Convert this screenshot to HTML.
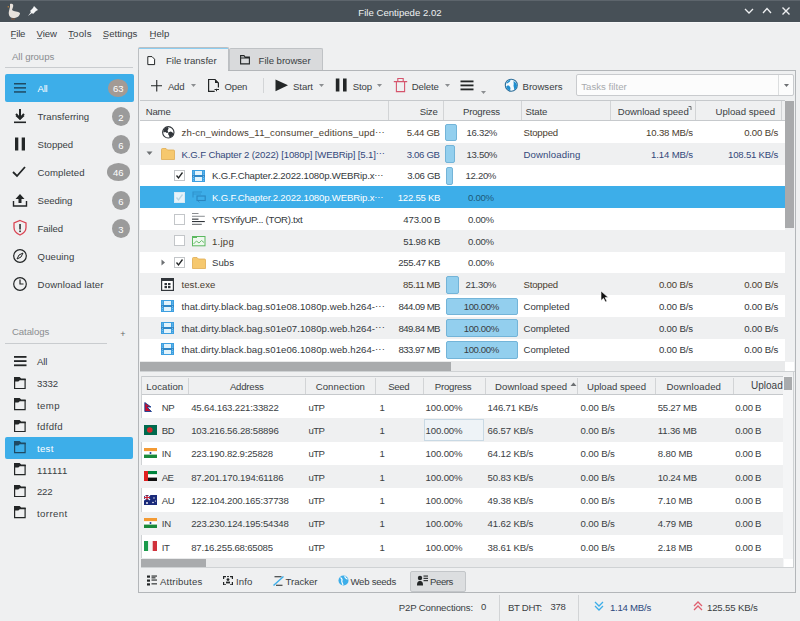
<!DOCTYPE html><html><head><meta charset="utf-8"><style>
html,body{margin:0;padding:0;}
body{width:800px;height:621px;overflow:hidden;background:#eff0f1;font-family:"Liberation Sans", sans-serif;position:relative;}
</style></head><body><div style="position:absolute;left:0px;top:0px;width:800px;height:22px;background:#475057;"></div><div style="position:absolute;left:0px;top:0px;width:800px;height:1px;background:#5d656c;"></div><div style="position:absolute;left:0px;top:22px;width:800px;height:1px;background:#f6f7f8;"></div><div style="position:absolute;left:250.01px;width:300px;top:6.91px;font-size:9.6px;line-height:11.04px;color:#eef0f2;white-space:nowrap;text-align:center;letter-spacing:0.013px;">File Centipede 2.02</div><svg style="position:absolute;left:6px;top:2px;" width="16" height="18" viewBox="0 0 16 18"><path d="M4 2 C6 1 8 2 7 5 L6 8 C8 10 12 9 14 11 C14 14 11 16 7 16 C4 16 2 13 3 9 L4 5 Z" fill="#e8e2dc"/><path d="M3 4 L1 5 L3 5.5Z" fill="#d08a3a"/><path d="M6 16 L6 18 M8 16 L8 18" stroke="#8a5a40" stroke-width="1"/></svg><svg style="position:absolute;left:27px;top:5px;" width="12" height="12" viewBox="0 0 12 12"><path d="M7 1 L11 5 L9 6 L6 9 L5 8 L1 11 L4 7 L3 6 L6 3 Z" fill="#f4f5f6"/></svg><svg style="position:absolute;left:743px;top:6px;" width="12" height="9" viewBox="0 0 12 9"><path d="M2 3 L6 7 L10 3" stroke="#eef0f2" stroke-width="1.3" fill="none"/></svg><svg style="position:absolute;left:761px;top:6px;" width="12" height="9" viewBox="0 0 12 9"><path d="M2 7 L6 2.5 L10 7" stroke="#eef0f2" stroke-width="1.3" fill="none"/></svg><svg style="position:absolute;left:780px;top:5px;" width="12" height="12" viewBox="0 0 12 12"><path d="M2.5 2.5 L9.5 9.5 M9.5 2.5 L2.5 9.5" stroke="#eef0f2" stroke-width="1.4" fill="none"/></svg><div style="position:absolute;left:10.6px;top:28.21px;font-size:9.6px;line-height:11.04px;color:#3a3e43;white-space:nowrap;letter-spacing:-0.217px;">File</div><div style="position:absolute;left:11.1px;top:38.3px;width:5px;height:1px;background:#7a7e82;"></div><div style="position:absolute;left:36.5px;top:28.21px;font-size:9.6px;line-height:11.04px;color:#3a3e43;white-space:nowrap;letter-spacing:-0.034px;">View</div><div style="position:absolute;left:37.0px;top:38.3px;width:5px;height:1px;background:#7a7e82;"></div><div style="position:absolute;left:68px;top:28.21px;font-size:9.6px;line-height:11.04px;color:#3a3e43;white-space:nowrap;letter-spacing:0.278px;">Tools</div><div style="position:absolute;left:68.5px;top:38.3px;width:5px;height:1px;background:#7a7e82;"></div><div style="position:absolute;left:102.8px;top:28.21px;font-size:9.6px;line-height:11.04px;color:#3a3e43;white-space:nowrap;letter-spacing:-0.023px;">Settings</div><div style="position:absolute;left:103.3px;top:38.3px;width:5px;height:1px;background:#7a7e82;"></div><div style="position:absolute;left:149.6px;top:28.21px;font-size:9.6px;line-height:11.04px;color:#3a3e43;white-space:nowrap;letter-spacing:-0.036px;">Help</div><div style="position:absolute;left:150.1px;top:38.3px;width:5px;height:1px;background:#7a7e82;"></div><div style="position:absolute;left:12px;top:51.21px;font-size:9.6px;line-height:11.04px;color:#8a8d90;white-space:nowrap;letter-spacing:-0.049px;">All groups</div><div style="position:absolute;left:5px;top:67px;width:128px;height:1px;background:#c9cccf;"></div><div style="position:absolute;left:5px;top:74px;width:129px;height:28px;background:#3daee9;border-radius:2px;"></div><svg style="position:absolute;left:14px;top:82.2px;" width="12" height="12" viewBox="0 0 12 12"><rect x="0" y="1.0" width="12" height="1.5" fill="#1f4a63"/><rect x="0" y="5.1" width="12" height="1.5" fill="#1f4a63"/><rect x="0" y="9.2" width="12" height="1.5" fill="#1f4a63"/></svg><div style="position:absolute;left:37.5px;top:83.11px;font-size:9.6px;line-height:11.04px;color:#ffffff;white-space:nowrap;letter-spacing:-0.223px;">All</div><div style="position:absolute;left:108.3px;top:79.4px;width:20px;height:17.2px;border-radius:50%;background:#a39a94;color:#ffffff;font-size:9.5px;line-height:17.2px;text-align:center;box-sizing:border-box;padding-top:1px;">63</div><div style="position:absolute;left:37.6px;top:111.11px;font-size:9.6px;line-height:11.04px;color:#3a3e43;white-space:nowrap;letter-spacing:0.018px;">Transferring</div><div style="position:absolute;left:112px;top:106.5px;width:18px;height:19.0px;border-radius:50%;background:#9b9b9b;color:#ffffff;font-size:9.5px;line-height:19.0px;text-align:center;box-sizing:border-box;padding-top:1px;">2</div><div style="position:absolute;left:37.6px;top:139.11px;font-size:9.6px;line-height:11.04px;color:#3a3e43;white-space:nowrap;letter-spacing:-0.023px;">Stopped</div><div style="position:absolute;left:112px;top:134.5px;width:18px;height:19.0px;border-radius:50%;background:#9b9b9b;color:#ffffff;font-size:9.5px;line-height:19.0px;text-align:center;box-sizing:border-box;padding-top:1px;">6</div><div style="position:absolute;left:37.6px;top:167.11px;font-size:9.6px;line-height:11.04px;color:#3a3e43;white-space:nowrap;letter-spacing:0.075px;">Completed</div><div style="position:absolute;left:106.5px;top:163px;width:23.6px;height:18px;border-radius:50%;background:#9b9b9b;color:#ffffff;font-size:9.5px;line-height:18px;text-align:center;box-sizing:border-box;padding-top:1px;">46</div><div style="position:absolute;left:37.6px;top:195.11px;font-size:9.6px;line-height:11.04px;color:#3a3e43;white-space:nowrap;letter-spacing:-0.090px;">Seeding</div><div style="position:absolute;left:112px;top:190.5px;width:18px;height:19.0px;border-radius:50%;background:#9b9b9b;color:#ffffff;font-size:9.5px;line-height:19.0px;text-align:center;box-sizing:border-box;padding-top:1px;">6</div><div style="position:absolute;left:37.6px;top:223.11px;font-size:9.6px;line-height:11.04px;color:#3a3e43;white-space:nowrap;letter-spacing:-0.124px;">Failed</div><div style="position:absolute;left:112px;top:218.5px;width:18px;height:19.0px;border-radius:50%;background:#9b9b9b;color:#ffffff;font-size:9.5px;line-height:19.0px;text-align:center;box-sizing:border-box;padding-top:1px;">3</div><div style="position:absolute;left:37.6px;top:251.11px;font-size:9.6px;line-height:11.04px;color:#3a3e43;white-space:nowrap;letter-spacing:0.073px;">Queuing</div><div style="position:absolute;left:37.6px;top:279.11px;font-size:9.6px;line-height:11.04px;color:#3a3e43;white-space:nowrap;letter-spacing:0.141px;">Download later</div><svg style="position:absolute;left:13px;top:108px;" width="14" height="16" viewBox="0 0 14 16"><path d="M7 1 V10 M3 6 L7 10.5 L11 6" stroke="#232627" stroke-width="2" fill="none"/><path d="M2.5 8 L7 12 L11.5 8Z" fill="#232627"/><rect x="1" y="13.5" width="12" height="1.6" fill="#232627"/></svg><svg style="position:absolute;left:14px;top:137px;" width="14" height="14" viewBox="0 0 14 14"><rect x="1" y="0.5" width="3.3" height="13" fill="#232627"/><rect x="7.7" y="0.5" width="3.3" height="13" fill="#232627"/></svg><svg style="position:absolute;left:11px;top:165px;" width="16" height="14" viewBox="0 0 16 14"><path d="M2 7 L6 11 L14 2" stroke="#232627" stroke-width="1.8" fill="none"/></svg><svg style="position:absolute;left:12px;top:192px;" width="16" height="16" viewBox="0 0 16 16"><path d="M8 2 L3.5 7 H6.5 V11 H9.5 V7 H12.5Z" fill="#232627"/><path d="M1.5 9 V14 H14.5 V9" stroke="#232627" stroke-width="1.4" fill="none"/></svg><svg style="position:absolute;left:12px;top:219px;" width="16" height="17" viewBox="0 0 16 17"><path d="M8 1.5 L14 4 V8.5 C14 12 11.5 14.5 8 16 C4.5 14.5 2 12 2 8.5 V4Z" stroke="#da4453" stroke-width="1.3" fill="none"/><rect x="7.3" y="5" width="1.5" height="5.5" fill="#232627"/><rect x="7.3" y="11.5" width="1.5" height="1.6" fill="#232627"/></svg><svg style="position:absolute;left:12px;top:248px;" width="16" height="16" viewBox="0 0 16 16"><circle cx="8" cy="8" r="6.3" stroke="#232627" stroke-width="1.2" fill="none"/><path d="M11 5 L9 9 L5 11 L7 7Z" stroke="#232627" stroke-width="1" fill="none"/></svg><svg style="position:absolute;left:12px;top:276px;" width="16" height="16" viewBox="0 0 16 16"><circle cx="8" cy="8" r="6.3" stroke="#232627" stroke-width="1.2" fill="none"/><path d="M8 3.5 V8 H11.5" stroke="#232627" stroke-width="1.2" fill="none"/></svg><div style="position:absolute;left:12px;top:325.91px;font-size:9.6px;line-height:11.04px;color:#8a8d90;white-space:nowrap;letter-spacing:-0.098px;">Catalogs</div><div style="position:absolute;left:120.2px;top:328.75px;font-size:9px;line-height:10.35px;color:#666;white-space:nowrap;">+</div><div style="position:absolute;left:5px;top:343px;width:102px;height:1px;background:#c9cccf;"></div><svg style="position:absolute;left:14px;top:355px;" width="12.5" height="12" viewBox="0 0 12.5 12"><rect x="0" y="1.0" width="12.5" height="1.8" fill="#232627"/><rect x="0" y="5.2" width="12.5" height="1.8" fill="#232627"/><rect x="0" y="9.4" width="12.5" height="1.8" fill="#232627"/></svg><div style="position:absolute;left:37px;top:356.21px;font-size:9.6px;line-height:11.04px;color:#3a3e43;white-space:nowrap;letter-spacing:-0.090px;">All</div><svg style="position:absolute;left:14px;top:376.6px;" width="12" height="12.5" viewBox="0 0 12 12.5"><path d="M0.6 0.5 V11.6 H11.1 V2" stroke="#232627" stroke-width="1.2" fill="none"/><path d="M0 0 H5.6 L7.2 1.5 H11.7 V3.2 H5.8 L4.3 4.6 H0Z" fill="#232627"/></svg><div style="position:absolute;left:37px;top:378.11px;font-size:9.6px;line-height:11.04px;color:#3a3e43;white-space:nowrap;letter-spacing:-0.063px;">3332</div><svg style="position:absolute;left:14px;top:398.20000000000005px;" width="12" height="12.5" viewBox="0 0 12 12.5"><path d="M0.6 0.5 V11.6 H11.1 V2" stroke="#232627" stroke-width="1.2" fill="none"/><path d="M0 0 H5.6 L7.2 1.5 H11.7 V3.2 H5.8 L4.3 4.6 H0Z" fill="#232627"/></svg><div style="position:absolute;left:37px;top:399.71px;font-size:9.6px;line-height:11.04px;color:#3a3e43;white-space:nowrap;letter-spacing:0.415px;">temp</div><svg style="position:absolute;left:14px;top:419.8px;" width="12" height="12.5" viewBox="0 0 12 12.5"><path d="M0.6 0.5 V11.6 H11.1 V2" stroke="#232627" stroke-width="1.2" fill="none"/><path d="M0 0 H5.6 L7.2 1.5 H11.7 V3.2 H5.8 L4.3 4.6 H0Z" fill="#232627"/></svg><div style="position:absolute;left:37px;top:421.31px;font-size:9.6px;line-height:11.04px;color:#3a3e43;white-space:nowrap;letter-spacing:0.331px;">fdfdfd</div><div style="position:absolute;left:5px;top:436.8px;width:128px;height:22px;background:#3daee9;border-radius:2px;"></div><svg style="position:absolute;left:14px;top:441.40000000000003px;" width="12" height="12.5" viewBox="0 0 12 12.5"><path d="M0.6 0.5 V11.6 H11.1 V2" stroke="#1f4a63" stroke-width="1.2" fill="none"/><path d="M0 0 H5.6 L7.2 1.5 H11.7 V3.2 H5.8 L4.3 4.6 H0Z" fill="#1f4a63"/></svg><div style="position:absolute;left:37px;top:442.91px;font-size:9.6px;line-height:11.04px;color:#ffffff;white-space:nowrap;letter-spacing:0.307px;">test</div><svg style="position:absolute;left:14px;top:463.0px;" width="12" height="12.5" viewBox="0 0 12 12.5"><path d="M0.6 0.5 V11.6 H11.1 V2" stroke="#232627" stroke-width="1.2" fill="none"/><path d="M0 0 H5.6 L7.2 1.5 H11.7 V3.2 H5.8 L4.3 4.6 H0Z" fill="#232627"/></svg><div style="position:absolute;left:37px;top:464.51px;font-size:9.6px;line-height:11.04px;color:#3a3e43;white-space:nowrap;letter-spacing:0.372px;">111111</div><svg style="position:absolute;left:14px;top:484.6px;" width="12" height="12.5" viewBox="0 0 12 12.5"><path d="M0.6 0.5 V11.6 H11.1 V2" stroke="#232627" stroke-width="1.2" fill="none"/><path d="M0 0 H5.6 L7.2 1.5 H11.7 V3.2 H5.8 L4.3 4.6 H0Z" fill="#232627"/></svg><div style="position:absolute;left:37px;top:486.11px;font-size:9.6px;line-height:11.04px;color:#3a3e43;white-space:nowrap;letter-spacing:-0.272px;">222</div><svg style="position:absolute;left:14px;top:506.20000000000005px;" width="12" height="12.5" viewBox="0 0 12 12.5"><path d="M0.6 0.5 V11.6 H11.1 V2" stroke="#232627" stroke-width="1.2" fill="none"/><path d="M0 0 H5.6 L7.2 1.5 H11.7 V3.2 H5.8 L4.3 4.6 H0Z" fill="#232627"/></svg><div style="position:absolute;left:37px;top:507.71px;font-size:9.6px;line-height:11.04px;color:#3a3e43;white-space:nowrap;letter-spacing:0.422px;">torrent</div><div style="position:absolute;left:229px;top:47.5px;width:94px;height:23px;background:#d9dadc;border:1px solid #bfc2c5;border-bottom:none;box-sizing:border-box;border-radius:2px 2px 0 0;"></div><div style="position:absolute;left:138px;top:47px;width:91px;height:24px;background:#eff0f1;border:1px solid #bcbfc2;border-bottom:none;box-sizing:border-box;border-radius:2px 2px 0 0;"></div><div style="position:absolute;left:139px;top:47.5px;width:89px;height:1.5px;background:#8ccdf0;"></div><svg style="position:absolute;left:147px;top:55.5px;" width="9" height="10" viewBox="0 0 9 10"><path d="M0.8 0.6 H5 L7.6 3.2 V8.6 H0.8Z" stroke="#232627" stroke-width="1" fill="#fcfcfc"/></svg><div style="position:absolute;left:166px;top:55.01px;font-size:9.6px;line-height:11.04px;color:#3a3e43;white-space:nowrap;letter-spacing:-0.006px;">File transfer</div><svg style="position:absolute;left:239.5px;top:55px;" width="10" height="9.5" viewBox="0 0 10 9.5"><path d="M0.6 0.6 H4 L5 2 H9.4 V8.9 H0.6Z M0.6 3 H9.4" stroke="#232627" stroke-width="1.1" fill="none"/></svg><div style="position:absolute;left:258.6px;top:55.01px;font-size:9.6px;line-height:11.04px;color:#3a3e43;white-space:nowrap;letter-spacing:-0.023px;">File browser</div><div style="position:absolute;left:138px;top:70px;width:658px;height:523px;border:1px solid #b3b6b9;box-sizing:border-box;background:#eff0f1;"></div><div style="position:absolute;left:139px;top:70px;width:89px;height:1px;background:#eff0f1;"></div><svg style="position:absolute;left:150.5px;top:80px;" width="11.5" height="11.5" viewBox="0 0 11.5 11.5"><path d="M5.75 0 V11.5 M0 5.75 H11.5" stroke="#232627" stroke-width="1.1"/></svg><div style="position:absolute;left:168px;top:81.31px;font-size:9.6px;line-height:11.04px;color:#3a3e43;white-space:nowrap;letter-spacing:-0.294px;">Add</div><svg style="position:absolute;left:190.5px;top:84px;" width="6" height="4" viewBox="0 0 6 4"><path d="M0 0 H5 L2.5 3Z" fill="#8b8e91"/></svg><svg style="position:absolute;left:207px;top:78px;" width="14" height="15" viewBox="0 0 14 15"><path d="M7.7 13.3 H1.6 V1.5 H8 L11.4 5 V9.5" stroke="#232627" stroke-width="1.2" fill="none"/><path d="M8 1.5 L11.4 5 H8Z" fill="#232627"/><path d="M7.5 11.5 H12 M9.5 10.8 V13.2" stroke="#232627" stroke-width="1"/></svg><div style="position:absolute;left:224.5px;top:81.31px;font-size:9.6px;line-height:11.04px;color:#3a3e43;white-space:nowrap;letter-spacing:-0.171px;">Open</div><div style="position:absolute;left:263px;top:78px;width:1px;height:15px;background:#d3d5d7;"></div><svg style="position:absolute;left:275px;top:79px;" width="14" height="13" viewBox="0 0 14 13"><path d="M0.5 0.5 L13 6.3 L0.5 12.3Z" fill="#232627"/></svg><div style="position:absolute;left:292.9px;top:81.31px;font-size:9.6px;line-height:11.04px;color:#3a3e43;white-space:nowrap;letter-spacing:-0.034px;">Start</div><svg style="position:absolute;left:318.5px;top:84px;" width="6" height="4" viewBox="0 0 6 4"><path d="M0 0 H5 L2.5 3Z" fill="#8b8e91"/></svg><svg style="position:absolute;left:335px;top:78px;" width="13" height="14" viewBox="0 0 13 14"><rect x="0.8" y="0.5" width="3.6" height="13" fill="#232627"/><rect x="8" y="0.5" width="3.6" height="13" fill="#232627"/></svg><div style="position:absolute;left:352.75px;top:81.31px;font-size:9.6px;line-height:11.04px;color:#3a3e43;white-space:nowrap;letter-spacing:-0.124px;">Stop</div><svg style="position:absolute;left:377px;top:84px;" width="6" height="4" viewBox="0 0 6 4"><path d="M0 0 H5 L2.5 3Z" fill="#8b8e91"/></svg><svg style="position:absolute;left:393px;top:77px;" width="15" height="16" viewBox="0 0 15 16"><path d="M3.4 5 V14.6 H11.6 V5 M0.8 4.6 H14.2 M4.8 4.6 V1.5 H10.2 V4.6" stroke="#d5546c" stroke-width="1.1" fill="none"/></svg><div style="position:absolute;left:411.75px;top:81.31px;font-size:9.6px;line-height:11.04px;color:#3a3e43;white-space:nowrap;letter-spacing:-0.125px;">Delete</div><svg style="position:absolute;left:444.5px;top:84px;" width="6" height="4" viewBox="0 0 6 4"><path d="M0 0 H5 L2.5 3Z" fill="#8b8e91"/></svg><svg style="position:absolute;left:460px;top:80px;" width="14" height="11" viewBox="0 0 14 11"><rect x="0.5" y="0.5" width="13" height="1.8" fill="#232627"/><rect x="0.5" y="4.5" width="13" height="1.8" fill="#232627"/><rect x="0.5" y="8.5" width="13" height="1.8" fill="#232627"/></svg><svg style="position:absolute;left:481px;top:91px;" width="6" height="4" viewBox="0 0 6 4"><path d="M0 0 H5 L2.5 3Z" fill="#8b8e91"/></svg><svg style="position:absolute;left:504px;top:78px;" width="15" height="15" viewBox="0 0 15 15"><circle cx="7.3" cy="7.2" r="6" fill="#f4fafd" stroke="#2f6f9a" stroke-width="1.1"/><path d="M2.5 5 C3.5 3 5 2 6.5 1.8 L6 3.5 C5 4 4.5 5 3 5.5Z" fill="#1f8fd0"/><path d="M3.5 7.5 C5 7 6.5 8.5 6.5 10.5 L6 12.8 C4 12 2.5 10 2.2 8.5Z" fill="#1f8fd0"/><path d="M9.5 3 C11 3.5 12.8 5.5 13 7.5 C12.8 9.5 11.5 11 10 12 C10.5 10 9.5 9 9.5 7.5 C10 6 9.5 4.5 9.5 3Z" fill="#1f8fd0"/></svg><div style="position:absolute;left:522.5px;top:81.31px;font-size:9.6px;line-height:11.04px;color:#3a3e43;white-space:nowrap;letter-spacing:-0.001px;">Browsers</div><div style="position:absolute;left:576px;top:74px;width:218px;height:22px;background:#fcfcfc;border:1px solid #c9cbce;box-sizing:border-box;border-radius:2px;"></div><div style="position:absolute;left:778px;top:75px;width:1px;height:20px;background:#dcdedf;"></div><div style="position:absolute;left:581.25px;top:81.31px;font-size:9.6px;line-height:11.04px;color:#a8abae;white-space:nowrap;letter-spacing:0.013px;">Tasks filter</div><svg style="position:absolute;left:783.5px;top:84px;" width="6" height="4" viewBox="0 0 6 4"><path d="M0 0 H5 L2.5 3Z" fill="#6d7073"/></svg><div style="position:absolute;left:140px;top:100px;width:645px;height:261px;background:#ffffff;"></div><div style="position:absolute;left:140px;top:100px;width:645px;height:21px;background:#eff0f1;border-top:1px solid #c6c9cc;border-bottom:1px solid #c6c9cc;box-sizing:border-box;"></div><div style="position:absolute;left:388px;top:101px;width:1px;height:19px;background:#d2d4d6;"></div><div style="position:absolute;left:442.5px;top:101px;width:1px;height:19px;background:#d2d4d6;"></div><div style="position:absolute;left:520.5px;top:101px;width:1px;height:19px;background:#d2d4d6;"></div><div style="position:absolute;left:609.5px;top:101px;width:1px;height:19px;background:#d2d4d6;"></div><div style="position:absolute;left:694.5px;top:101px;width:1px;height:19px;background:#d2d4d6;"></div><div style="position:absolute;left:780.5px;top:101px;width:1px;height:19px;background:#d2d4d6;"></div><div style="position:absolute;left:145.7px;top:105.51px;font-size:9.6px;line-height:11.04px;color:#3a3e43;white-space:nowrap;letter-spacing:-0.177px;">Name</div><div style="position:absolute;right:362.54px;top:105.51px;font-size:9.6px;line-height:11.04px;color:#3a3e43;white-space:nowrap;text-align:right;letter-spacing:-0.244px;">Size</div><div style="position:absolute;left:331.41px;width:300px;top:105.51px;font-size:9.6px;line-height:11.04px;color:#3a3e43;white-space:nowrap;text-align:center;letter-spacing:-0.176px;">Progress</div><div style="position:absolute;left:525.6px;top:105.51px;font-size:9.6px;line-height:11.04px;color:#3a3e43;white-space:nowrap;letter-spacing:-0.143px;">State</div><div style="position:absolute;right:111.29px;top:105.51px;font-size:9.6px;line-height:11.04px;color:#3a3e43;white-space:nowrap;text-align:right;letter-spacing:-0.037px;">Download speed</div><svg style="position:absolute;left:688px;top:106px;" width="6" height="6" viewBox="0 0 6 6"><path d="M0.5 0.5 H3 V4" stroke="#6d7073" stroke-width="1" fill="none"/></svg><div style="position:absolute;right:24.98px;top:105.51px;font-size:9.6px;line-height:11.04px;color:#3a3e43;white-space:nowrap;text-align:right;letter-spacing:0.022px;">Upload speed</div><div style="position:absolute;left:785px;top:100px;width:10px;height:261px;background:#eff0f1;"></div><div style="position:absolute;left:784.5px;top:100.5px;width:9.5px;height:127.5px;background:#a9aaac;"></div><div style="position:absolute;left:140px;top:142.75px;width:645px;height:21.75px;background:#eff0f1;"></div><div style="position:absolute;left:140px;top:186.25px;width:645px;height:21.75px;background:#3daee9;"></div><div style="position:absolute;left:140px;top:229.75px;width:645px;height:21.75px;background:#eff0f1;"></div><div style="position:absolute;left:140px;top:273.25px;width:645px;height:21.75px;background:#eff0f1;"></div><div style="position:absolute;left:140px;top:316.75px;width:645px;height:21.75px;background:#eff0f1;"></div><svg style="position:absolute;left:161.5px;top:125.5px;" width="13" height="13" viewBox="0 0 13 13"><circle cx="6.3" cy="6.3" r="5.7" fill="#fff" stroke="#31363b" stroke-width="1.1"/><path d="M1.3 5 C1.8 3 3.3 1.4 5.8 1 L6.6 2.6 L5.6 4.6 L6.3 6.4 L4.8 6.9 L3.4 5.9 L1.6 6.6Z" fill="#31363b"/><path d="M6.4 6.2 L8.9 5.6 L11.6 7.2 C11.2 9.2 9.8 11 7.6 11.7 L7 9.6 L6.1 8.2Z" fill="#31363b"/></svg><div style="position:absolute;left:181.5px;top:126.81px;font-size:9.6px;line-height:11.04px;color:#4a3c2e;white-space:nowrap;letter-spacing:0.139px;">zh-cn_windows_11_consumer_editions_upd<span style="position:relative;top:-1.3px">&middot;&middot;&middot;</span></div><div style="position:absolute;right:360.32px;top:126.81px;font-size:9.6px;line-height:11.04px;color:#4a3c2e;white-space:nowrap;text-align:right;letter-spacing:-0.317px;">5.44 GB</div><div style="position:absolute;left:445.25px;top:123.6px;width:11.550000000000011px;height:17.75px;background:#93cfee;border:1px solid #73b4d8;box-sizing:border-box;border-radius:2px;"></div><div style="position:absolute;left:331.83px;width:300px;top:126.81px;font-size:9.6px;line-height:11.04px;color:#3a3e43;white-space:nowrap;text-align:center;letter-spacing:-0.343px;">16.32%</div><div style="position:absolute;left:523.5px;top:126.81px;font-size:9.6px;line-height:11.04px;color:#4a3c2e;white-space:nowrap;letter-spacing:-0.180px;">Stopped</div><div style="position:absolute;right:107.18px;top:126.81px;font-size:9.6px;line-height:11.04px;color:#4a3c2e;white-space:nowrap;text-align:right;letter-spacing:-0.180px;">10.38 MB/s</div><div style="position:absolute;right:21.90px;top:126.81px;font-size:9.6px;line-height:11.04px;color:#4a3c2e;white-space:nowrap;text-align:right;letter-spacing:-0.152px;">0.00 B/s</div><svg style="position:absolute;left:145.5px;top:150.75px;" width="7" height="5" viewBox="0 0 7 5"><path d="M0.5 0.5 H6.5 L3.5 4Z" fill="#6d7073"/></svg><svg style="position:absolute;left:160.5px;top:147.75px;" width="14" height="12" viewBox="0 0 14 12"><path d="M0.5 1.5 Q0.5 0.5 1.5 0.5 H5 L6.5 2 H12.5 Q13.5 2 13.5 3 V11.5 H0.5Z" fill="#f6c86e" stroke="#e0ac52" stroke-width="0.8"/></svg><div style="position:absolute;left:181.5px;top:148.56px;font-size:9.6px;line-height:11.04px;color:#33487a;white-space:nowrap;letter-spacing:-0.140px;">K.G.F Chapter 2 (2022) [1080p] [WEBRip] [5.1]<span style="position:relative;top:-1.3px">&middot;&middot;&middot;</span></div><div style="position:absolute;right:360.32px;top:148.56px;font-size:9.6px;line-height:11.04px;color:#33487a;white-space:nowrap;text-align:right;letter-spacing:-0.317px;">3.06 GB</div><div style="position:absolute;left:445.25px;top:145.35px;width:9.75px;height:17.75px;background:#93cfee;border:1px solid #73b4d8;box-sizing:border-box;border-radius:2px;"></div><div style="position:absolute;left:331.83px;width:300px;top:148.56px;font-size:9.6px;line-height:11.04px;color:#3a3e43;white-space:nowrap;text-align:center;letter-spacing:-0.343px;">13.50%</div><div style="position:absolute;left:523.5px;top:148.56px;font-size:9.6px;line-height:11.04px;color:#33487a;white-space:nowrap;letter-spacing:0.136px;">Downloading</div><div style="position:absolute;right:107.16px;top:148.56px;font-size:9.6px;line-height:11.04px;color:#33487a;white-space:nowrap;text-align:right;letter-spacing:-0.163px;">1.14 MB/s</div><div style="position:absolute;right:21.96px;top:148.56px;font-size:9.6px;line-height:11.04px;color:#33487a;white-space:nowrap;text-align:right;letter-spacing:-0.209px;">108.51 KB/s</div><svg style="position:absolute;left:173.8px;top:170.0px;" width="11" height="11" viewBox="0 0 11 11"><rect x="0.5" y="0.5" width="10" height="10" fill="#ffffff" stroke="#c3c6c9" stroke-width="1"/><path d="M2.5 5.5 L4.5 8 L8.5 2.5" stroke="#232627" stroke-width="1.3" fill="none"/></svg><svg style="position:absolute;left:192px;top:169.8px;" width="13" height="12" viewBox="0 0 13 12"><rect x="0.5" y="0.5" width="12" height="11" fill="#e2f3fb" stroke="#3d9fe0" stroke-width="1"/><rect x="0" y="0" width="3" height="12" fill="#3d9fe0"/><rect x="10" y="0" width="3" height="12" fill="#3d9fe0"/><rect x="0" y="5" width="13" height="2" fill="#2f86c6"/><path d="M1.5 1.5 V11 M11.5 1.5 V11" stroke="#8fd0f5" stroke-width="0.8" stroke-dasharray="1 1.2"/></svg><div style="position:absolute;left:212px;top:170.31px;font-size:9.6px;line-height:11.04px;color:#34383c;white-space:nowrap;letter-spacing:-0.163px;">K.G.F.Chapter.2.2022.1080p.WEBRip.x<span style="position:relative;top:-1.3px">&middot;&middot;&middot;</span></div><div style="position:absolute;right:359.82px;top:170.31px;font-size:9.6px;line-height:11.04px;color:#34383c;white-space:nowrap;text-align:right;letter-spacing:-0.317px;">3.06 GB</div><div style="position:absolute;left:445.6px;top:167.1px;width:7.7999999999999545px;height:17.75px;background:#93cfee;border:1px solid #73b4d8;box-sizing:border-box;border-radius:2px;"></div><div style="position:absolute;left:330.83px;width:300px;top:170.31px;font-size:9.6px;line-height:11.04px;color:#3a3e43;white-space:nowrap;text-align:center;letter-spacing:-0.343px;">12.20%</div><svg style="position:absolute;left:173.8px;top:191.75px;" width="11" height="11" viewBox="0 0 11 11"><rect x="0.5" y="0.5" width="10" height="10" fill="#e6f3fa" stroke="#d7e9f3" stroke-width="1"/><path d="M2.5 5.5 L4.5 8 L8.5 2.5" stroke="#b9d5e4" stroke-width="1.3" fill="none"/></svg><svg style="position:absolute;left:191.5px;top:190.75px;" width="14" height="13" viewBox="0 0 14 13"><path d="M1 6.5 V1 H10" stroke="#2f92cc" stroke-width="1.1" fill="none"/><path d="M1 3 H9" stroke="#2f92cc" stroke-width="0.8"/><rect x="5" y="5" width="8.2" height="4.5" stroke="#2a86c0" stroke-width="1.1" fill="none"/><path d="M6 10 L7.5 11.5" stroke="#2f92cc" stroke-width="1"/></svg><div style="position:absolute;left:212px;top:192.06px;font-size:9.6px;line-height:11.04px;color:#ffffff;white-space:nowrap;letter-spacing:-0.163px;">K.G.F.Chapter.2.2022.1080p.WEBRip.x<span style="position:relative;top:-1.3px">&middot;&middot;&middot;</span></div><div style="position:absolute;right:359.76px;top:192.06px;font-size:9.6px;line-height:11.04px;color:#ffffff;white-space:nowrap;text-align:right;letter-spacing:-0.259px;">122.55 KB</div><div style="position:absolute;left:330.88px;width:300px;top:192.06px;font-size:9.6px;line-height:11.04px;color:#1d5a7a;white-space:nowrap;text-align:center;letter-spacing:-0.244px;">0.00%</div><svg style="position:absolute;left:173.8px;top:213.5px;" width="11" height="11" viewBox="0 0 11 11"><rect x="0.5" y="0.5" width="10" height="10" fill="#ffffff" stroke="#c3c6c9" stroke-width="1"/></svg><svg style="position:absolute;left:192px;top:213.3px;" width="13" height="12" viewBox="0 0 13 12"><rect x="0" y="0" width="6.5" height="0.9" fill="#7d8185"/><rect x="0" y="2.8" width="12.8" height="0.9" fill="#7d8185"/><rect x="0" y="5.6" width="6.5" height="1.1" fill="#31363b"/><rect x="0" y="8" width="12.8" height="1.1" fill="#31363b"/><rect x="0" y="10.8" width="9.8" height="1" fill="#5a5e62"/></svg><div style="position:absolute;left:212px;top:213.81px;font-size:9.6px;line-height:11.04px;color:#34383c;white-space:nowrap;letter-spacing:-0.267px;">YTSYifyUP... (TOR).txt</div><div style="position:absolute;right:359.68px;top:213.81px;font-size:9.6px;line-height:11.04px;color:#34383c;white-space:nowrap;text-align:right;letter-spacing:-0.179px;">473.00 B</div><div style="position:absolute;left:330.88px;width:300px;top:213.81px;font-size:9.6px;line-height:11.04px;color:#3a3e43;white-space:nowrap;text-align:center;letter-spacing:-0.244px;">0.00%</div><svg style="position:absolute;left:173.8px;top:235.25px;" width="11" height="11" viewBox="0 0 11 11"><rect x="0.5" y="0.5" width="10" height="10" fill="#ffffff" stroke="#c3c6c9" stroke-width="1"/></svg><svg style="position:absolute;left:192px;top:236.05px;" width="14" height="10.5" viewBox="0 0 14 10.5"><rect x="0.5" y="0.5" width="12.5" height="9.3" fill="#eef8ee" stroke="#5cb860" stroke-width="1"/><path d="M1.5 8 L4.5 5 L7 7 L9.5 4.5 L12 6.5" stroke="#5cb860" stroke-width="0.9" fill="none"/><path d="M0.5 0.5 H5 V2 H0.5Z" fill="#5cb860"/></svg><div style="position:absolute;left:212px;top:235.56px;font-size:9.6px;line-height:11.04px;color:#4a3c2e;white-space:nowrap;letter-spacing:0.237px;">1.jpg</div><div style="position:absolute;right:359.81px;top:235.56px;font-size:9.6px;line-height:11.04px;color:#34383c;white-space:nowrap;text-align:right;letter-spacing:-0.312px;">51.98 KB</div><div style="position:absolute;left:330.88px;width:300px;top:235.56px;font-size:9.6px;line-height:11.04px;color:#3a3e43;white-space:nowrap;text-align:center;letter-spacing:-0.244px;">0.00%</div><svg style="position:absolute;left:160.5px;top:259.0px;" width="5" height="7" viewBox="0 0 5 7"><path d="M0.5 0.5 V6.5 L4 3.5Z" fill="#6d7073"/></svg><svg style="position:absolute;left:173.8px;top:257.0px;" width="11" height="11" viewBox="0 0 11 11"><rect x="0.5" y="0.5" width="10" height="10" fill="#ffffff" stroke="#c3c6c9" stroke-width="1"/><path d="M2.5 5.5 L4.5 8 L8.5 2.5" stroke="#232627" stroke-width="1.3" fill="none"/></svg><svg style="position:absolute;left:192px;top:257.0px;" width="14" height="12" viewBox="0 0 14 12"><path d="M0.5 1.5 Q0.5 0.5 1.5 0.5 H5 L6.5 2 H12.5 Q13.5 2 13.5 3 V11.5 H0.5Z" fill="#f6c86e" stroke="#e0ac52" stroke-width="0.8"/></svg><div style="position:absolute;left:212px;top:257.31px;font-size:9.6px;line-height:11.04px;color:#34383c;white-space:nowrap;letter-spacing:0.030px;">Subs</div><div style="position:absolute;right:359.81px;top:257.31px;font-size:9.6px;line-height:11.04px;color:#34383c;white-space:nowrap;text-align:right;letter-spacing:-0.315px;">255.47 KB</div><div style="position:absolute;left:330.88px;width:300px;top:257.31px;font-size:9.6px;line-height:11.04px;color:#3a3e43;white-space:nowrap;text-align:center;letter-spacing:-0.244px;">0.00%</div><svg style="position:absolute;left:161px;top:278.25px;" width="13" height="13" viewBox="0 0 13 13"><rect x="0.6" y="0.6" width="11.8" height="11.8" fill="#fff" stroke="#31363b" stroke-width="1.2"/><rect x="0.6" y="0.6" width="11.8" height="2.4" fill="#31363b"/><rect x="3.5" y="5" width="2.5" height="2.2" fill="#31363b"/><rect x="7" y="5" width="2.5" height="2.2" fill="#31363b"/><rect x="3.5" y="8" width="2.5" height="2.2" fill="#31363b"/><rect x="7" y="8" width="2.5" height="2.2" fill="#31363b"/></svg><div style="position:absolute;left:181.5px;top:279.06px;font-size:9.6px;line-height:11.04px;color:#4a3c2e;white-space:nowrap;letter-spacing:0.048px;">test.exe</div><div style="position:absolute;right:359.92px;top:279.06px;font-size:9.6px;line-height:11.04px;color:#4a3c2e;white-space:nowrap;text-align:right;letter-spacing:-0.422px;">85.11 MB</div><div style="position:absolute;left:445.6px;top:275.85px;width:13.399999999999977px;height:17.75px;background:#93cfee;border:1px solid #73b4d8;box-sizing:border-box;border-radius:2px;"></div><div style="position:absolute;left:330.83px;width:300px;top:279.06px;font-size:9.6px;line-height:11.04px;color:#3a3e43;white-space:nowrap;text-align:center;letter-spacing:-0.343px;">21.30%</div><div style="position:absolute;left:523.5px;top:279.06px;font-size:9.6px;line-height:11.04px;color:#4a3c2e;white-space:nowrap;letter-spacing:-0.180px;">Stopped</div><div style="position:absolute;right:107.15px;top:279.06px;font-size:9.6px;line-height:11.04px;color:#4a3c2e;white-space:nowrap;text-align:right;letter-spacing:-0.152px;">0.00 B/s</div><div style="position:absolute;right:21.90px;top:279.06px;font-size:9.6px;line-height:11.04px;color:#4a3c2e;white-space:nowrap;text-align:right;letter-spacing:-0.152px;">0.00 B/s</div><svg style="position:absolute;left:161px;top:299.8px;" width="13" height="12" viewBox="0 0 13 12"><rect x="0.5" y="0.5" width="12" height="11" fill="#e2f3fb" stroke="#3d9fe0" stroke-width="1"/><rect x="0" y="0" width="3" height="12" fill="#3d9fe0"/><rect x="10" y="0" width="3" height="12" fill="#3d9fe0"/><rect x="0" y="5" width="13" height="2" fill="#2f86c6"/><path d="M1.5 1.5 V11 M11.5 1.5 V11" stroke="#8fd0f5" stroke-width="0.8" stroke-dasharray="1 1.2"/></svg><div style="position:absolute;left:181.5px;top:300.81px;font-size:9.6px;line-height:11.04px;color:#34383c;white-space:nowrap;letter-spacing:0.066px;">that.dirty.black.bag.s01e08.1080p.web.h264-<span style="position:relative;top:-1.3px">&middot;&middot;&middot;</span></div><div style="position:absolute;right:360.05px;top:300.81px;font-size:9.6px;line-height:11.04px;color:#34383c;white-space:nowrap;text-align:right;letter-spacing:-0.547px;">844.09 MB</div><div style="position:absolute;left:445.6px;top:297.6px;width:72.0px;height:17.75px;background:#93cfee;border:1px solid #73b4d8;box-sizing:border-box;border-radius:2px;"></div><div style="position:absolute;left:331.29px;width:300px;top:300.81px;font-size:9.6px;line-height:11.04px;color:#3a3e43;white-space:nowrap;text-align:center;letter-spacing:-0.414px;">100.00%</div><div style="position:absolute;left:523.5px;top:300.81px;font-size:9.6px;line-height:11.04px;color:#34383c;white-space:nowrap;letter-spacing:-0.047px;">Completed</div><div style="position:absolute;right:107.15px;top:300.81px;font-size:9.6px;line-height:11.04px;color:#34383c;white-space:nowrap;text-align:right;letter-spacing:-0.152px;">0.00 B/s</div><div style="position:absolute;right:21.90px;top:300.81px;font-size:9.6px;line-height:11.04px;color:#34383c;white-space:nowrap;text-align:right;letter-spacing:-0.152px;">0.00 B/s</div><svg style="position:absolute;left:161px;top:321.55px;" width="13" height="12" viewBox="0 0 13 12"><rect x="0.5" y="0.5" width="12" height="11" fill="#e2f3fb" stroke="#3d9fe0" stroke-width="1"/><rect x="0" y="0" width="3" height="12" fill="#3d9fe0"/><rect x="10" y="0" width="3" height="12" fill="#3d9fe0"/><rect x="0" y="5" width="13" height="2" fill="#2f86c6"/><path d="M1.5 1.5 V11 M11.5 1.5 V11" stroke="#8fd0f5" stroke-width="0.8" stroke-dasharray="1 1.2"/></svg><div style="position:absolute;left:181.5px;top:322.56px;font-size:9.6px;line-height:11.04px;color:#34383c;white-space:nowrap;letter-spacing:0.066px;">that.dirty.black.bag.s01e07.1080p.web.h264-<span style="position:relative;top:-1.3px">&middot;&middot;&middot;</span></div><div style="position:absolute;right:360.05px;top:322.56px;font-size:9.6px;line-height:11.04px;color:#34383c;white-space:nowrap;text-align:right;letter-spacing:-0.547px;">849.84 MB</div><div style="position:absolute;left:445.6px;top:319.35px;width:72.0px;height:17.75px;background:#93cfee;border:1px solid #73b4d8;box-sizing:border-box;border-radius:2px;"></div><div style="position:absolute;left:331.29px;width:300px;top:322.56px;font-size:9.6px;line-height:11.04px;color:#3a3e43;white-space:nowrap;text-align:center;letter-spacing:-0.414px;">100.00%</div><div style="position:absolute;left:523.5px;top:322.56px;font-size:9.6px;line-height:11.04px;color:#34383c;white-space:nowrap;letter-spacing:-0.047px;">Completed</div><div style="position:absolute;right:107.15px;top:322.56px;font-size:9.6px;line-height:11.04px;color:#34383c;white-space:nowrap;text-align:right;letter-spacing:-0.152px;">0.00 B/s</div><div style="position:absolute;right:21.90px;top:322.56px;font-size:9.6px;line-height:11.04px;color:#34383c;white-space:nowrap;text-align:right;letter-spacing:-0.152px;">0.00 B/s</div><svg style="position:absolute;left:161px;top:343.3px;" width="13" height="12" viewBox="0 0 13 12"><rect x="0.5" y="0.5" width="12" height="11" fill="#e2f3fb" stroke="#3d9fe0" stroke-width="1"/><rect x="0" y="0" width="3" height="12" fill="#3d9fe0"/><rect x="10" y="0" width="3" height="12" fill="#3d9fe0"/><rect x="0" y="5" width="13" height="2" fill="#2f86c6"/><path d="M1.5 1.5 V11 M11.5 1.5 V11" stroke="#8fd0f5" stroke-width="0.8" stroke-dasharray="1 1.2"/></svg><div style="position:absolute;left:181.5px;top:344.31px;font-size:9.6px;line-height:11.04px;color:#34383c;white-space:nowrap;letter-spacing:0.066px;">that.dirty.black.bag.s01e06.1080p.web.h264-<span style="position:relative;top:-1.3px">&middot;&middot;&middot;</span></div><div style="position:absolute;right:360.05px;top:344.31px;font-size:9.6px;line-height:11.04px;color:#34383c;white-space:nowrap;text-align:right;letter-spacing:-0.547px;">833.97 MB</div><div style="position:absolute;left:445.6px;top:341.1px;width:72.0px;height:17.75px;background:#93cfee;border:1px solid #73b4d8;box-sizing:border-box;border-radius:2px;"></div><div style="position:absolute;left:331.29px;width:300px;top:344.31px;font-size:9.6px;line-height:11.04px;color:#3a3e43;white-space:nowrap;text-align:center;letter-spacing:-0.414px;">100.00%</div><div style="position:absolute;left:523.5px;top:344.31px;font-size:9.6px;line-height:11.04px;color:#34383c;white-space:nowrap;letter-spacing:-0.047px;">Completed</div><div style="position:absolute;right:107.15px;top:344.31px;font-size:9.6px;line-height:11.04px;color:#34383c;white-space:nowrap;text-align:right;letter-spacing:-0.152px;">0.00 B/s</div><div style="position:absolute;right:21.90px;top:344.31px;font-size:9.6px;line-height:11.04px;color:#34383c;white-space:nowrap;text-align:right;letter-spacing:-0.152px;">0.00 B/s</div><svg style="position:absolute;left:600px;top:290px;" width="9" height="13" viewBox="0 0 9 13"><path d="M1 1 V10.5 L3.5 8.3 L5.5 12 L7 11.2 L5 7.6 H8.3Z" fill="#111" stroke="#fff" stroke-width="0.6"/></svg><div style="position:absolute;left:140px;top:361px;width:645px;height:10px;background:#e9eaeb;"></div><div style="position:absolute;left:140px;top:362px;width:311px;height:9px;background:#a9abad;"></div><div style="position:absolute;left:785px;top:362px;width:9px;height:9px;background:#ffffff;"></div><div style="position:absolute;left:140px;top:371px;width:655px;height:1px;background:#cfd2d4;"></div><div style="position:absolute;left:141px;top:376.5px;width:642px;height:181.5px;background:#ffffff;"></div><div style="position:absolute;left:141px;top:376px;width:642px;height:19px;background:#eff0f1;border-top:1px solid #c6c9cc;border-bottom:1px solid #c6c9cc;box-sizing:border-box;"></div><div style="position:absolute;left:141px;top:376px;width:1px;height:191.5px;background:#cfd2d4;"></div><div style="position:absolute;left:188px;top:377.5px;width:1px;height:16.5px;background:#d2d4d6;"></div><div style="position:absolute;left:305px;top:377.5px;width:1px;height:16.5px;background:#d2d4d6;"></div><div style="position:absolute;left:375.4px;top:377.5px;width:1px;height:16.5px;background:#d2d4d6;"></div><div style="position:absolute;left:422.5px;top:377.5px;width:1px;height:16.5px;background:#d2d4d6;"></div><div style="position:absolute;left:484.6px;top:377.5px;width:1px;height:16.5px;background:#d2d4d6;"></div><div style="position:absolute;left:577.4px;top:377.5px;width:1px;height:16.5px;background:#d2d4d6;"></div><div style="position:absolute;left:655.4px;top:377.5px;width:1px;height:16.5px;background:#d2d4d6;"></div><div style="position:absolute;left:732.5px;top:377.5px;width:1px;height:16.5px;background:#d2d4d6;"></div><div style="position:absolute;left:14.79px;width:300px;top:381.21px;font-size:9.6px;line-height:11.04px;color:#3a3e43;white-space:nowrap;text-align:center;letter-spacing:0.088px;">Location</div><div style="position:absolute;left:96.80px;width:300px;top:381.21px;font-size:9.6px;line-height:11.04px;color:#3a3e43;white-space:nowrap;text-align:center;letter-spacing:-0.209px;">Address</div><div style="position:absolute;left:190.34px;width:300px;top:381.21px;font-size:9.6px;line-height:11.04px;color:#3a3e43;white-space:nowrap;text-align:center;letter-spacing:0.084px;">Connection</div><div style="position:absolute;left:248.82px;width:300px;top:381.21px;font-size:9.6px;line-height:11.04px;color:#3a3e43;white-space:nowrap;text-align:center;letter-spacing:-0.355px;">Seed</div><div style="position:absolute;left:303.09px;width:300px;top:381.21px;font-size:9.6px;line-height:11.04px;color:#3a3e43;white-space:nowrap;text-align:center;letter-spacing:-0.214px;">Progress</div><div style="position:absolute;left:495px;top:381.21px;font-size:9.6px;line-height:11.04px;color:#3a3e43;white-space:nowrap;letter-spacing:0.056px;">Download speed</div><svg style="position:absolute;left:569.5px;top:382px;" width="7" height="5" viewBox="0 0 7 5"><path d="M0.5 4 L3.5 0.5 L6.5 4Z" fill="#6d7073"/></svg><div style="position:absolute;left:466.49px;width:300px;top:381.21px;font-size:9.6px;line-height:11.04px;color:#3a3e43;white-space:nowrap;text-align:center;letter-spacing:-0.020px;">Upload speed</div><div style="position:absolute;left:543.81px;width:300px;top:381.21px;font-size:9.6px;line-height:11.04px;color:#3a3e43;white-space:nowrap;text-align:center;letter-spacing:0.113px;">Downloaded</div><div style="position:absolute;left:732px;top:376px;width:51px;height:18px;overflow:hidden;"><div style="position:absolute;left:19px;top:4.25px;font-size:10px;line-height:11.5px;color:#3a3e43;white-space:nowrap;">Upload speed</div></div><div style="position:absolute;left:783px;top:376px;width:10px;height:191.5px;background:#f4f5f6;"></div><div style="position:absolute;left:783.5px;top:377px;width:8.5px;height:13px;background:#a9abad;"></div><div style="position:absolute;left:161.8px;top:401.81px;font-size:9.6px;line-height:11.04px;color:#3a3e43;white-space:nowrap;letter-spacing:-0.468px;">NP</div><div style="position:absolute;left:191.2px;top:401.81px;font-size:9.6px;line-height:11.04px;color:#3a3e43;white-space:nowrap;letter-spacing:-0.176px;">45.64.163.221:33822</div><div style="position:absolute;left:308.5px;top:401.81px;font-size:9.6px;line-height:11.04px;color:#3a3e43;white-space:nowrap;letter-spacing:-0.618px;">uTP</div><div style="position:absolute;left:379.6px;top:401.81px;font-size:9.6px;line-height:11.04px;color:#3a3e43;white-space:nowrap;">1</div><div style="position:absolute;left:425.5px;top:401.81px;font-size:9.6px;line-height:11.04px;color:#3a3e43;white-space:nowrap;letter-spacing:-0.128px;">100.00%</div><div style="position:absolute;left:487.6px;top:401.81px;font-size:9.6px;line-height:11.04px;color:#3a3e43;white-space:nowrap;letter-spacing:-0.173px;">146.71 KB/s</div><div style="position:absolute;left:580.6px;top:401.81px;font-size:9.6px;line-height:11.04px;color:#3a3e43;white-space:nowrap;letter-spacing:-0.127px;">0.00 B/s</div><div style="position:absolute;left:657.8px;top:401.81px;font-size:9.6px;line-height:11.04px;color:#3a3e43;white-space:nowrap;letter-spacing:-0.261px;">55.27 MB</div><div style="position:absolute;left:735.2px;top:401.81px;font-size:9.6px;line-height:11.04px;color:#3a3e43;white-space:nowrap;letter-spacing:-0.292px;">0.00 B</div><div style="position:absolute;left:141px;top:418.3px;width:642px;height:23.3px;background:#eff0f1;"></div><div style="position:absolute;left:423.8px;top:418.6px;width:60.5px;height:22.7px;background:#eef3f7;border:1px solid #c9d9e4;box-sizing:border-box;"></div><div style="position:absolute;left:161.8px;top:425.11px;font-size:9.6px;line-height:11.04px;color:#3a3e43;white-space:nowrap;letter-spacing:-0.468px;">BD</div><div style="position:absolute;left:191.2px;top:425.11px;font-size:9.6px;line-height:11.04px;color:#3a3e43;white-space:nowrap;letter-spacing:-0.176px;">103.216.56.28:58896</div><div style="position:absolute;left:308.5px;top:425.11px;font-size:9.6px;line-height:11.04px;color:#3a3e43;white-space:nowrap;letter-spacing:-0.618px;">uTP</div><div style="position:absolute;left:379.6px;top:425.11px;font-size:9.6px;line-height:11.04px;color:#3a3e43;white-space:nowrap;">1</div><div style="position:absolute;left:425.5px;top:425.11px;font-size:9.6px;line-height:11.04px;color:#3a3e43;white-space:nowrap;letter-spacing:-0.128px;">100.00%</div><div style="position:absolute;left:487.6px;top:425.11px;font-size:9.6px;line-height:11.04px;color:#3a3e43;white-space:nowrap;letter-spacing:-0.136px;">66.57 KB/s</div><div style="position:absolute;left:580.6px;top:425.11px;font-size:9.6px;line-height:11.04px;color:#3a3e43;white-space:nowrap;letter-spacing:-0.127px;">0.00 B/s</div><div style="position:absolute;left:657.8px;top:425.11px;font-size:9.6px;line-height:11.04px;color:#3a3e43;white-space:nowrap;letter-spacing:-0.172px;">11.36 MB</div><div style="position:absolute;left:735.2px;top:425.11px;font-size:9.6px;line-height:11.04px;color:#3a3e43;white-space:nowrap;letter-spacing:-0.292px;">0.00 B</div><div style="position:absolute;left:161.8px;top:448.41px;font-size:9.6px;line-height:11.04px;color:#3a3e43;white-space:nowrap;letter-spacing:-0.100px;">IN</div><div style="position:absolute;left:191.2px;top:448.41px;font-size:9.6px;line-height:11.04px;color:#3a3e43;white-space:nowrap;letter-spacing:-0.206px;">223.190.82.9:25828</div><div style="position:absolute;left:308.5px;top:448.41px;font-size:9.6px;line-height:11.04px;color:#3a3e43;white-space:nowrap;letter-spacing:-0.618px;">uTP</div><div style="position:absolute;left:379.6px;top:448.41px;font-size:9.6px;line-height:11.04px;color:#3a3e43;white-space:nowrap;">1</div><div style="position:absolute;left:425.5px;top:448.41px;font-size:9.6px;line-height:11.04px;color:#3a3e43;white-space:nowrap;letter-spacing:-0.128px;">100.00%</div><div style="position:absolute;left:487.6px;top:448.41px;font-size:9.6px;line-height:11.04px;color:#3a3e43;white-space:nowrap;letter-spacing:-0.136px;">64.12 KB/s</div><div style="position:absolute;left:580.6px;top:448.41px;font-size:9.6px;line-height:11.04px;color:#3a3e43;white-space:nowrap;letter-spacing:-0.127px;">0.00 B/s</div><div style="position:absolute;left:657.8px;top:448.41px;font-size:9.6px;line-height:11.04px;color:#3a3e43;white-space:nowrap;letter-spacing:-0.150px;">8.80 MB</div><div style="position:absolute;left:735.2px;top:448.41px;font-size:9.6px;line-height:11.04px;color:#3a3e43;white-space:nowrap;letter-spacing:-0.292px;">0.00 B</div><div style="position:absolute;left:141px;top:464.9px;width:642px;height:23.3px;background:#eff0f1;"></div><div style="position:absolute;left:161.8px;top:471.71px;font-size:9.6px;line-height:11.04px;color:#3a3e43;white-space:nowrap;letter-spacing:-0.654px;">AE</div><div style="position:absolute;left:191.2px;top:471.71px;font-size:9.6px;line-height:11.04px;color:#3a3e43;white-space:nowrap;letter-spacing:-0.159px;">87.201.170.194:61186</div><div style="position:absolute;left:308.5px;top:471.71px;font-size:9.6px;line-height:11.04px;color:#3a3e43;white-space:nowrap;letter-spacing:-0.618px;">uTP</div><div style="position:absolute;left:379.6px;top:471.71px;font-size:9.6px;line-height:11.04px;color:#3a3e43;white-space:nowrap;">1</div><div style="position:absolute;left:425.5px;top:471.71px;font-size:9.6px;line-height:11.04px;color:#3a3e43;white-space:nowrap;letter-spacing:-0.128px;">100.00%</div><div style="position:absolute;left:487.6px;top:471.71px;font-size:9.6px;line-height:11.04px;color:#3a3e43;white-space:nowrap;letter-spacing:-0.136px;">50.83 KB/s</div><div style="position:absolute;left:580.6px;top:471.71px;font-size:9.6px;line-height:11.04px;color:#3a3e43;white-space:nowrap;letter-spacing:-0.127px;">0.00 B/s</div><div style="position:absolute;left:657.8px;top:471.71px;font-size:9.6px;line-height:11.04px;color:#3a3e43;white-space:nowrap;letter-spacing:-0.261px;">10.24 MB</div><div style="position:absolute;left:735.2px;top:471.71px;font-size:9.6px;line-height:11.04px;color:#3a3e43;white-space:nowrap;letter-spacing:-0.292px;">0.00 B</div><div style="position:absolute;left:161.8px;top:495.01px;font-size:9.6px;line-height:11.04px;color:#3a3e43;white-space:nowrap;letter-spacing:-0.468px;">AU</div><div style="position:absolute;left:191.2px;top:495.01px;font-size:9.6px;line-height:11.04px;color:#3a3e43;white-space:nowrap;letter-spacing:-0.187px;">122.104.200.165:37738</div><div style="position:absolute;left:308.5px;top:495.01px;font-size:9.6px;line-height:11.04px;color:#3a3e43;white-space:nowrap;letter-spacing:-0.618px;">uTP</div><div style="position:absolute;left:379.6px;top:495.01px;font-size:9.6px;line-height:11.04px;color:#3a3e43;white-space:nowrap;">1</div><div style="position:absolute;left:425.5px;top:495.01px;font-size:9.6px;line-height:11.04px;color:#3a3e43;white-space:nowrap;letter-spacing:-0.128px;">100.00%</div><div style="position:absolute;left:487.6px;top:495.01px;font-size:9.6px;line-height:11.04px;color:#3a3e43;white-space:nowrap;letter-spacing:-0.136px;">49.38 KB/s</div><div style="position:absolute;left:580.6px;top:495.01px;font-size:9.6px;line-height:11.04px;color:#3a3e43;white-space:nowrap;letter-spacing:-0.127px;">0.00 B/s</div><div style="position:absolute;left:657.8px;top:495.01px;font-size:9.6px;line-height:11.04px;color:#3a3e43;white-space:nowrap;letter-spacing:-0.150px;">7.10 MB</div><div style="position:absolute;left:735.2px;top:495.01px;font-size:9.6px;line-height:11.04px;color:#3a3e43;white-space:nowrap;letter-spacing:-0.292px;">0.00 B</div><div style="position:absolute;left:141px;top:511.5px;width:642px;height:23.3px;background:#eff0f1;"></div><div style="position:absolute;left:161.8px;top:518.31px;font-size:9.6px;line-height:11.04px;color:#3a3e43;white-space:nowrap;letter-spacing:-0.100px;">IN</div><div style="position:absolute;left:191.2px;top:518.31px;font-size:9.6px;line-height:11.04px;color:#3a3e43;white-space:nowrap;letter-spacing:-0.187px;">223.230.124.195:54348</div><div style="position:absolute;left:308.5px;top:518.31px;font-size:9.6px;line-height:11.04px;color:#3a3e43;white-space:nowrap;letter-spacing:-0.618px;">uTP</div><div style="position:absolute;left:379.6px;top:518.31px;font-size:9.6px;line-height:11.04px;color:#3a3e43;white-space:nowrap;">1</div><div style="position:absolute;left:425.5px;top:518.31px;font-size:9.6px;line-height:11.04px;color:#3a3e43;white-space:nowrap;letter-spacing:-0.128px;">100.00%</div><div style="position:absolute;left:487.6px;top:518.31px;font-size:9.6px;line-height:11.04px;color:#3a3e43;white-space:nowrap;letter-spacing:-0.136px;">41.62 KB/s</div><div style="position:absolute;left:580.6px;top:518.31px;font-size:9.6px;line-height:11.04px;color:#3a3e43;white-space:nowrap;letter-spacing:-0.127px;">0.00 B/s</div><div style="position:absolute;left:657.8px;top:518.31px;font-size:9.6px;line-height:11.04px;color:#3a3e43;white-space:nowrap;letter-spacing:-0.150px;">4.79 MB</div><div style="position:absolute;left:735.2px;top:518.31px;font-size:9.6px;line-height:11.04px;color:#3a3e43;white-space:nowrap;letter-spacing:-0.292px;">0.00 B</div><div style="position:absolute;left:161.8px;top:541.61px;font-size:9.6px;line-height:11.04px;color:#3a3e43;white-space:nowrap;letter-spacing:-0.515px;">IT</div><div style="position:absolute;left:191.2px;top:541.61px;font-size:9.6px;line-height:11.04px;color:#3a3e43;white-space:nowrap;letter-spacing:-0.206px;">87.16.255.68:65085</div><div style="position:absolute;left:308.5px;top:541.61px;font-size:9.6px;line-height:11.04px;color:#3a3e43;white-space:nowrap;letter-spacing:-0.618px;">uTP</div><div style="position:absolute;left:379.6px;top:541.61px;font-size:9.6px;line-height:11.04px;color:#3a3e43;white-space:nowrap;">1</div><div style="position:absolute;left:425.5px;top:541.61px;font-size:9.6px;line-height:11.04px;color:#3a3e43;white-space:nowrap;letter-spacing:-0.128px;">100.00%</div><div style="position:absolute;left:487.6px;top:541.61px;font-size:9.6px;line-height:11.04px;color:#3a3e43;white-space:nowrap;letter-spacing:-0.136px;">38.61 KB/s</div><div style="position:absolute;left:580.6px;top:541.61px;font-size:9.6px;line-height:11.04px;color:#3a3e43;white-space:nowrap;letter-spacing:-0.127px;">0.00 B/s</div><div style="position:absolute;left:657.8px;top:541.61px;font-size:9.6px;line-height:11.04px;color:#3a3e43;white-space:nowrap;letter-spacing:-0.150px;">2.18 MB</div><div style="position:absolute;left:735.2px;top:541.61px;font-size:9.6px;line-height:11.04px;color:#3a3e43;white-space:nowrap;letter-spacing:-0.292px;">0.00 B</div><svg style="position:absolute;left:143.8px;top:401.5px;" width="9" height="10" viewBox="0 0 9 10"><path d="M0.8 0.5 L7 5 H3 L7.5 9.5 H0.8Z" fill="#c8102e" stroke="#003893" stroke-width="0.8"/></svg><svg style="position:absolute;left:143.8px;top:424.8px;" width="13" height="10" viewBox="0 0 13 10"><rect width="13" height="10" fill="#006a4e"/><circle cx="5.8" cy="5" r="2.8" fill="#d9262c"/></svg><svg style="position:absolute;left:143.8px;top:448.1px;" width="13" height="10" viewBox="0 0 13 10"><rect width="13" height="3.4" fill="#f39a33"/><rect y="3.3" width="13" height="3.4" fill="#ffffff"/><rect y="6.6" width="13" height="3.4" fill="#1a8a3a"/><circle cx="6.5" cy="5" r="1" fill="#1a3a8a"/></svg><svg style="position:absolute;left:143.8px;top:518.0px;" width="13" height="10" viewBox="0 0 13 10"><rect width="13" height="3.4" fill="#f39a33"/><rect y="3.3" width="13" height="3.4" fill="#ffffff"/><rect y="6.6" width="13" height="3.4" fill="#1a8a3a"/><circle cx="6.5" cy="5" r="1" fill="#1a3a8a"/></svg><svg style="position:absolute;left:143.8px;top:471.4px;" width="13" height="10" viewBox="0 0 13 10"><rect width="13" height="3.4" fill="#00843d"/><rect y="3.3" width="13" height="3.4" fill="#ffffff"/><rect y="6.6" width="13" height="3.4" fill="#111"/><rect width="4" height="10" fill="#e02020"/></svg><svg style="position:absolute;left:143.8px;top:494.7px;" width="13" height="10" viewBox="0 0 13 10"><rect width="13" height="10" fill="#1a2a7a"/><path d="M0 0 L6 5 M6 0 L0 5" stroke="#fff" stroke-width="1.2"/><path d="M3 0 V5 M0 2.5 H6" stroke="#d02030" stroke-width="1.1"/><circle cx="3" cy="8" r="0.9" fill="#fff"/><circle cx="10" cy="3" r="0.7" fill="#fff"/><circle cx="9" cy="7.5" r="0.8" fill="#fff"/><circle cx="11.5" cy="6" r="0.6" fill="#fff"/></svg><svg style="position:absolute;left:143.8px;top:541.3px;" width="13" height="10" viewBox="0 0 13 10"><rect width="4.3" height="10" fill="#1a9a4a"/><rect x="4.3" width="4.4" height="10" fill="#f5f5f5"/><rect x="8.7" width="4.3" height="10" fill="#d0303a"/></svg><div style="position:absolute;left:141px;top:558px;width:642px;height:9.5px;background:#e9eaeb;"></div><div style="position:absolute;left:141px;top:558.5px;width:65px;height:9px;background:#a9abad;"></div><div style="position:absolute;left:783.5px;top:558.7px;width:9px;height:8.5px;background:#ffffff;"></div><div style="position:absolute;left:141px;top:567.3px;width:652px;height:1px;background:#cfd2d4;"></div><div style="position:absolute;left:792.5px;top:371.5px;width:1px;height:196px;background:#cfd2d4;"></div><div style="position:absolute;left:410px;top:570.5px;width:55.5px;height:21.5px;background:#dcdee0;border:1px solid #c3c6c9;box-sizing:border-box;border-radius:2px;"></div><svg style="position:absolute;left:147px;top:575px;" width="10" height="11" viewBox="0 0 10 11"><rect x="0" y="0.5" width="3" height="2.2" fill="#232627"/><rect x="4.5" y="0.5" width="5.5" height="1.1" fill="#232627"/><rect x="4.5" y="2.3" width="4" height="1.1" fill="#232627"/><rect x="0" y="4.5" width="3" height="2.2" fill="#232627"/><rect x="4.5" y="4.5" width="5.5" height="1.1" fill="#232627"/><rect x="0" y="8.3" width="3" height="2.2" fill="#232627"/><rect x="4.5" y="8.3" width="5.5" height="1.1" fill="#232627"/></svg><div style="position:absolute;left:160px;top:576.31px;font-size:9.6px;line-height:11.04px;color:#3a3e43;white-space:nowrap;letter-spacing:0.195px;">Attributes</div><svg style="position:absolute;left:223px;top:575.5px;" width="10" height="9.5" viewBox="0 0 10 9.5"><path d="M0.6 3 V0.6 H3 M7 0.6 H9.4 V3 M9.4 6 V8.9 H7 M3 8.9 H0.6 V6" stroke="#232627" stroke-width="1.2" fill="none"/><path d="M4 0.6 H6" stroke="#232627" stroke-width="1" /><circle cx="5" cy="3.6" r="1.4" fill="#232627"/><rect x="3" y="5.6" width="4" height="1.8" fill="#232627"/></svg><div style="position:absolute;left:236px;top:576.31px;font-size:9.6px;line-height:11.04px;color:#3a3e43;white-space:nowrap;letter-spacing:0.122px;">Info</div><svg style="position:absolute;left:273px;top:575.5px;" width="11" height="10" viewBox="0 0 11 10"><path d="M1.5 0.8 H8.5 M3 9.2 H9.5" stroke="#232627" stroke-width="1.1"/><path d="M0.5 9.5 L10.5 0.5" stroke="#3daee9" stroke-width="1.4"/></svg><div style="position:absolute;left:285.5px;top:576.31px;font-size:9.6px;line-height:11.04px;color:#3a3e43;white-space:nowrap;letter-spacing:-0.025px;">Tracker</div><svg style="position:absolute;left:338px;top:575px;" width="11" height="11" viewBox="0 0 11 11"><circle cx="5.5" cy="5.5" r="5" fill="#3daee9"/><path d="M2.5 2.5 C4 3.5 4.5 4.5 3.8 6 C3.5 7 4.5 8 5 10 M7 1 C6.5 2.5 8 3.5 9.5 4.2" stroke="#fff" stroke-width="1.2" fill="none"/></svg><div style="position:absolute;left:350.5px;top:576.31px;font-size:9.6px;line-height:11.04px;color:#3a3e43;white-space:nowrap;letter-spacing:-0.261px;">Web seeds</div><svg style="position:absolute;left:417px;top:575px;" width="11" height="11" viewBox="0 0 11 11"><circle cx="3" cy="3" r="2.2" fill="#232627"/><path d="M0 10.5 C0 7 1 6 3 6 C5 6 6 7 6 10.5Z" fill="#232627"/><rect x="6.5" y="0.5" width="4.5" height="1.1" fill="#232627"/><rect x="6.5" y="2.8" width="4.5" height="1.1" fill="#232627"/><rect x="6.5" y="5.1" width="4.5" height="1.1" fill="#232627"/></svg><div style="position:absolute;left:430px;top:576.31px;font-size:9.6px;line-height:11.04px;color:#3a3e43;white-space:nowrap;letter-spacing:-0.415px;">Peers</div><div style="position:absolute;left:398.75px;top:601.51px;font-size:9.6px;line-height:11.04px;color:#3a3e43;white-space:nowrap;letter-spacing:-0.151px;">P2P Connections:</div><div style="position:absolute;left:481px;top:601.50px;font-size:9.5px;line-height:10.92px;color:#3a3e43;white-space:nowrap;">0</div><div style="position:absolute;left:498.5px;top:595px;width:1px;height:26px;background:#d2d4d6;"></div><div style="position:absolute;left:508px;top:601.51px;font-size:9.6px;line-height:11.04px;color:#3a3e43;white-space:nowrap;letter-spacing:-0.299px;">BT DHT:</div><div style="position:absolute;left:550.6px;top:601.50px;font-size:9.5px;line-height:10.92px;color:#3a3e43;white-space:nowrap;letter-spacing:-0.283px;">378</div><div style="position:absolute;left:577.5px;top:595px;width:1px;height:26px;background:#d2d4d6;"></div><svg style="position:absolute;left:594px;top:601px;" width="10" height="10" viewBox="0 0 10 10"><path d="M1 1 L5 5 L9 1 M1 5 L5 9 L9 5" stroke="#3daee9" stroke-width="1.3" fill="none"/></svg><div style="position:absolute;left:610px;top:601.51px;font-size:9.6px;line-height:11.04px;color:#2d4a7e;white-space:nowrap;letter-spacing:-0.246px;">1.14 MB/s</div><svg style="position:absolute;left:693px;top:601px;" width="10" height="10" viewBox="0 0 10 10"><path d="M1 5 L5 1 L9 5 M1 9 L5 5 L9 9" stroke="#e06070" stroke-width="1.3" fill="none"/></svg><div style="position:absolute;left:707px;top:601.51px;font-size:9.6px;line-height:11.04px;color:#3a3e43;white-space:nowrap;letter-spacing:-0.155px;">125.55 KB/s</div></body></html>
